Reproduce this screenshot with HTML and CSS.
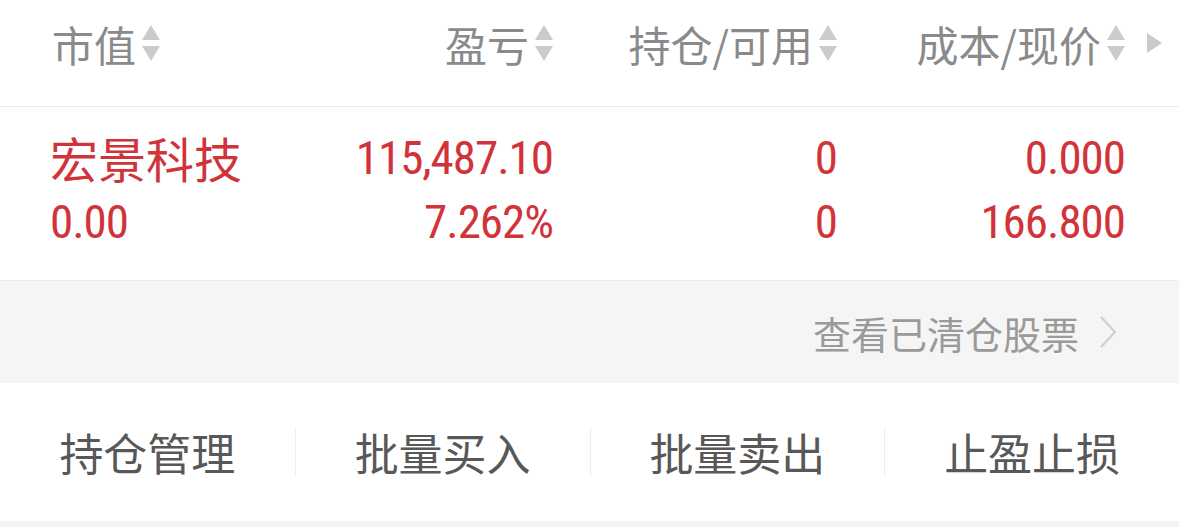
FILE: index.html
```html
<!DOCTYPE html>
<html lang="zh-CN">
<head>
  <meta charset="UTF-8">
  <title>持仓</title>
  <link rel="stylesheet" href="styles.css">
</head>
<body>
<div id="page">
  <div class="head">
    <div class="col c1">市值<span class="sort"><i class="up"></i><i class="down"></i></span></div>
    <div class="col c2">盈亏<span class="sort"><i class="up"></i><i class="down"></i></span></div>
    <div class="col c3">持仓/可用<span class="sort"><i class="up"></i><i class="down"></i></span></div>
    <div class="col c4">成本/现价<span class="sort"><i class="up"></i><i class="down"></i></span></div>
    <div class="more"></div>
  </div>
  <div class="stock">
    <div class="line">
      <div class="col c1 name">宏景科技</div>
      <div class="col c2 num">115,487.10</div>
      <div class="col c3 num">0</div>
      <div class="col c4 num">0.000</div>
    </div>
    <div class="line">
      <div class="col c1 num">0.00</div>
      <div class="col c2 num">7.262%</div>
      <div class="col c3 num">0</div>
      <div class="col c4 num">166.800</div>
    </div>
  </div>
  <div class="cleared">
    <span>查看已清仓股票</span>
    <svg class="chev" width="18" height="34" viewBox="0 0 18 34"><path d="M2 2 L16 17 L2 32" fill="none" stroke="#cfcfcf" stroke-width="2.2"/></svg>
  </div>
  <div class="tools">
    <div class="tool">持仓管理</div>
    <div class="tool">批量买入</div>
    <div class="tool">批量卖出</div>
    <div class="tool">止盈止损</div>
  </div>
</div>
</body>
</html>
```

FILE: styles.css
```css
body {
  margin: 0;
  background: #fff;
  font-family: "Noto Sans CJK SC", "Noto Sans", sans-serif;
}
#page {
  width: 1179px;
}
.head, .line {
  display: grid;
  grid-template-columns: 260px 241px 284px 288px 1fr;
  padding-left: 52px;
}
.head {
  height: 86px;
  padding-bottom: 20px;
  align-items: center;
  border-bottom: 1px solid #ececec;
  color: #8a8a8a;
  font-size: 42px;
}
.col {
  white-space: nowrap;
}
.c2, .c3, .c4 {
  text-align: right;
}
.head .col {
  display: flex;
  align-items: center;
}
.head .c2, .head .c3, .head .c4 {
  justify-content: flex-end;
}
.sort {
  display: inline-flex;
  flex-direction: column;
  gap: 6px;
  margin-left: 6px;
}
.sort i {
  display: block;
  width: 0;
  height: 0;
  border-left: 9px solid transparent;
  border-right: 9px solid transparent;
}
.sort .up {
  border-bottom: 15px solid #cbcbcb;
}
.sort .down {
  border-top: 15px solid #cbcbcb;
}
.more {
  width: 0;
  height: 0;
  margin-left: 22px;
  border-top: 10px solid transparent;
  border-bottom: 10px solid transparent;
  border-left: 15px solid #cbcbcb;
}
.stock {
  padding: 15px 0 26px;
  border-bottom: 1px solid #ececec;
  color: #d1333a;
}
.line {
  height: 66px;
  align-items: center;
}
.line .c1 {
  margin-left: -2px;
}
.name {
  font-size: 48px;
}
.num {
  font-family: "Liberation Sans Narrow", "Roboto Condensed", Roboto, sans-serif;
  font-size: 47px;
  letter-spacing: -1px;
}
.cleared {
  height: 102px;
  background: #f5f5f5;
  display: flex;
  align-items: center;
  justify-content: flex-end;
  gap: 20px;
  padding-right: 62px;
  color: #9a9a9a;
  font-size: 38px;
}
.chev {
  display: block;
}
.tools {
  display: grid;
  grid-template-columns: repeat(4, 1fr);
  align-items: center;
  height: 138px;
  border-bottom: 6px solid #f3f3f3;
}
.tool {
  text-align: center;
  font-size: 44px;
  color: #585858;
  line-height: 50px;
  border-left: 1px solid #eeeeee;
}
.tool:first-child {
  border-left: none;
}
```
